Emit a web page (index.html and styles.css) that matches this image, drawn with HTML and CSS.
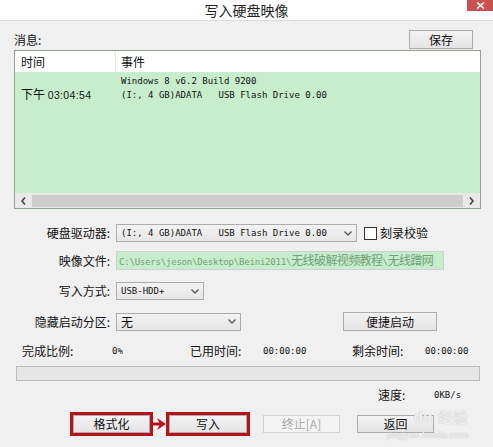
FILE: index.html
```html
<!DOCTYPE html>
<html lang="zh-CN">
<head>
<meta charset="utf-8">
<title>写入硬盘映像</title>
<link rel="stylesheet" href="styles.css">
</head>
<body>
<div class="titlebar">
  <span></span>
  <span class="title">写入硬盘映像</span>
  <span class="close"><svg width="9" height="7" viewBox="0 0 9 7"><path d="M1 0.5 L8 6.5 M8 0.5 L1 6.5" stroke="#fff" stroke-width="1.6" fill="none"/></svg></span>
</div>

<div class="msghead">
  <span class="lbl">消息:</span>
  <span class="btn save">保存</span>
</div>

<div class="list">
  <div class="lhead">
    <div class="c1">时间</div>
    <div class="c2">事件</div>
  </div>
  <div class="lbody">
    <div class="lrow">
      <div class="c1 time"><span class="cjk">下午</span> <span class="clock">03:04:54</span></div>
      <div class="c2 mono">Windows 8 v6.2 Build 9200<br>(I:, 4 GB)ADATA&nbsp;&nbsp;&nbsp;USB Flash Drive 0.00</div>
    </div>
  </div>
  <div class="hscroll">
    <span class="arr"><svg width="5" height="8" viewBox="0 0 5 8"><path d="M4 0.5 L1 4 L4 7.5" stroke="#444" stroke-width="1.6" fill="none"/></svg></span>
    <span class="thumb"></span>
    <span class="arr"><svg width="5" height="8" viewBox="0 0 5 8"><path d="M1 0.5 L4 4 L1 7.5" stroke="#444" stroke-width="1.6" fill="none"/></svg></span>
  </div>
</div>

<div class="form">
  <div class="frow r1">
    <span class="flabel">硬盘驱动器:</span>
    <div class="ctl">
      <div class="select w-drive"><span class="mono">(I:, 4 GB)ADATA&nbsp;&nbsp;&nbsp;USB Flash Drive 0.00</span><svg class="chev" width="8" height="5" viewBox="0 0 8 5"><path d="M0.5 0.5 L4 4 L7.5 0.5" stroke="#555" stroke-width="1.3" fill="none"/></svg></div>
      <span class="check"><span class="box"></span>刻录校验</span>
    </div>
  </div>
  <div class="frow r2">
    <span class="flabel">映像文件:</span>
    <div class="ctl">
      <div class="path mono"><span class="pathtext">C:\Users\jeson\Desktop\Beini2011\<span class="cjkw">无线破解视频教程</span>\<span class="cjkw">无线蹭网</span></span></div>
    </div>
  </div>
  <div class="frow r3">
    <span class="flabel">写入方式:</span>
    <div class="ctl">
      <div class="select w-mode"><span class="mono">USB-HDD+</span><svg class="chev" width="8" height="5" viewBox="0 0 8 5"><path d="M0.5 0.5 L4 4 L7.5 0.5" stroke="#555" stroke-width="1.3" fill="none"/></svg></div>
    </div>
  </div>
  <div class="frow r4">
    <span class="flabel">隐藏启动分区:</span>
    <div class="ctl">
      <div class="select w-hide"><span>无</span><svg class="chev" width="8" height="5" viewBox="0 0 8 5"><path d="M0.5 0.5 L4 4 L7.5 0.5" stroke="#555" stroke-width="1.3" fill="none"/></svg></div>
      <span class="btn quick">便捷启动</span>
    </div>
  </div>
</div>

<div class="stats">
  <span>完成比例:</span>
  <span class="mono">0%</span>
  <span>已用时间:</span>
  <span class="mono">00:00:00</span>
  <span>剩余时间:</span>
  <span class="mono">00:00:00</span>
</div>

<div class="progress"></div>

<div class="speed">
  <span class="slbl">速度:</span>
  <span class="mono">0KB/s</span>
</div>

<div class="actions">
  <span class="mark"><span class="btn act">格式化</span></span>
  <svg class="arrow" width="13" height="14" viewBox="0 0 13 14"><path d="M0 7 L8 7" stroke="#b3141d" stroke-width="3"/><path d="M4 1 L13 7 L4 13 L7 7 Z" fill="#b3141d"/></svg>
  <span class="mark m2"><span class="btn act">写入</span></span>
  <span class="btn act disabled">终止[A]</span>
  <span class="btn act back">返回</span>
</div>

<div class="watermark">
  <div class="wm-top"><span class="paw">du</span><span class="wm-cn">经验</span></div>
  <div class="wm-url">jingyan.baidu.com</div>
</div>
</body>
</html>
```

FILE: styles.css
```css
html, body {
  margin: 0;
  padding: 0;
}
body {
  width: 493px;
  height: 447px;
  overflow: hidden;
  position: relative;
  background: #f0f0f0;
  font-family: "Noto Sans CJK SC", "Noto Sans", sans-serif;
  font-size: 12px;
  line-height: 14px;
  color: #111;
}
.mono {
  font-family: "DejaVu Sans Mono", "Liberation Mono", "Noto Sans CJK SC", monospace;
  font-size: 9px;
  color: #111;
}
.cjkw {
  font-family: "Noto Sans CJK SC", sans-serif;
  font-size: 12px;
}

/* title bar */
.titlebar {
  height: 20px;
  background: #fff;
  border-bottom: 1px solid #dcdcdc;
  display: grid;
  grid-template-columns: 1fr auto 1fr;
}
.title {
  font-size: 14px;
  line-height: 20px;
  height: 20px;
  color: #222;
}
.close {
  justify-self: end;
  width: 26px;
  height: 11px;
  background: #c9504f;
  display: flex;
  align-items: center;
  justify-content: center;
}

/* message header */
.msghead {
  margin: 9px 20px 0 14px;
  height: 19px;
  display: flex;
  justify-content: space-between;
  align-items: flex-end;
}
.msghead .lbl {
  line-height: 14px;
  padding-bottom: 2px;
}
.btn {
  box-sizing: border-box;
  border: 1px solid #acacac;
  background: linear-gradient(#f3f3f3, #e4e4e4);
  display: inline-flex;
  align-items: center;
  justify-content: center;
  font-size: 12px;
  line-height: 14px;
  color: #111;
}
.save {
  width: 64px;
  height: 19px;
}

/* list */
.list {
  margin: 1px 0 0 14px;
  width: 467px;
  height: 159px;
  box-sizing: border-box;
  border: 1px solid #8fa18f;
  box-shadow: inset 0 0 0 1px #d6e0d6;
  display: flex;
  flex-direction: column;
}
.lhead {
  height: 21px;
  background: #fff;
  display: grid;
  grid-template-columns: 100px 1fr;
  line-height: 21px;
}
.lhead .c1 { padding-left: 6px; }
.lhead .c2 { padding-left: 5px; border-left: 1px solid #e6e6e6; }
.lbody {
  flex: 1;
  background: #c7edcc;
  padding-top: 2px;
}
.lrow {
  display: grid;
  grid-template-columns: 100px 1fr;
}
.lrow .c1 {
  align-self: end;
  padding-left: 6px;
  line-height: 14px;
}
.lrow .c2 {
  padding-left: 6px;
  line-height: 14px;
  white-space: nowrap;
}
.clock {
  font-family: "Liberation Sans", sans-serif;
  font-size: 10.5px;
  letter-spacing: 0.35px;
}
.hscroll {
  height: 15px;
  background: #e9e9e9;
  display: flex;
  align-items: stretch;
}
.arr {
  width: 17px;
  display: flex;
  align-items: center;
  justify-content: center;
}
.thumb {
  flex: 1;
  background: #cdcdcd;
  margin: 2px 0 1px;
}

/* form */
.form {
  margin-top: 15px;
}
.frow {
  display: grid;
  grid-template-columns: 110px 1fr;
  column-gap: 6px;
  align-items: center;
}
.r1 { height: 18px; }
.r2 { height: 19px; margin-top: 9px; }
.r3 { height: 18px; margin-top: 12px; }
.r4 { height: 19px; margin-top: 12px; }
.flabel {
  text-align: right;
  line-height: 14px;
}
.ctl {
  display: flex;
  align-items: center;
  height: 100%;
}
.select {
  box-sizing: border-box;
  height: 18px;
  border: 1px solid #acacac;
  background: linear-gradient(#f3f3f3, #e6e6e6);
  display: flex;
  align-items: center;
  justify-content: space-between;
  padding: 0 4px 0 4px;
  white-space: nowrap;
  overflow: hidden;
}
.w-drive { width: 241px; }
.w-mode { width: 88px; }
.w-hide { width: 125px; }
.check {
  display: inline-flex;
  align-items: center;
  margin-left: 7px;
  gap: 3px;
}
.check .box {
  width: 13px;
  height: 13px;
  box-sizing: border-box;
  border: 1px solid #333;
  background: #fff;
}
.path {
  box-sizing: border-box;
  width: 328px;
  height: 19px;
  border: 1px solid #cfcfcf;
  background: #c7edcc;
  padding-left: 2px;
  display: flex;
  align-items: center;
}
.pathtext {
  color: #72a079;
  white-space: nowrap;
  letter-spacing: -0.2px;
}
.pathtext .cjkw {
  letter-spacing: -0.6px;
}
.quick {
  width: 94px;
  height: 19px;
  margin-left: 102px;
}

/* stats */
.stats {
  margin-top: 13px;
  height: 14px;
  padding-left: 22px;
  display: grid;
  grid-template-columns: 90px 78px 73px 89px 73px auto;
  align-items: center;
  line-height: 14px;
}
.progress {
  margin: 8px 0 0 16px;
  width: 464px;
  height: 15px;
  box-sizing: border-box;
  border: 1px solid #bcbcbc;
  background: #e6e6e6;
}
.speed {
  margin-top: 7px;
  height: 13px;
  padding-left: 378px;
  display: flex;
  align-items: center;
}
.slbl { width: 56px; }

/* actions */
.actions {
  margin-top: 11px;
  height: 24px;
  padding-left: 70px;
  display: flex;
  align-items: center;
}
.mark {
  box-sizing: border-box;
  border: 3px solid #b3141d;
  display: flex;
  height: 24px;
}
.act {
  width: 77px;
  height: 18px;
}
.m2 .act { width: 78px; }
.disabled {
  margin-left: 13px;
  color: #a8a8a8;
  border-color: #d0d0d0;
  background: #f4f4f4;
}
.back {
  margin-left: 17px;
}

/* watermark overlay */
.watermark {
  position: absolute;
  left: 380px;
  top: 406px;
  width: 95px;
  color: rgba(255, 255, 255, 0.75);
  text-shadow: 0 0 1px #c4c4c4, 0 0 1px #c4c4c4;
  pointer-events: none;
}
.wm-top {
  display: flex;
  align-items: center;
  padding-left: 30px;
  gap: 2px;
}
.paw {
  font-family: "Liberation Sans", sans-serif;
  font-weight: bold;
  font-size: 15px;
  line-height: 22px;
  width: 26px;
  text-align: center;
}
.wm-cn {
  font-size: 15px;
  line-height: 22px;
}
.wm-url {
  font-family: "Liberation Serif", serif;
  font-size: 11px;
  line-height: 12px;
  text-align: center;
}
```
